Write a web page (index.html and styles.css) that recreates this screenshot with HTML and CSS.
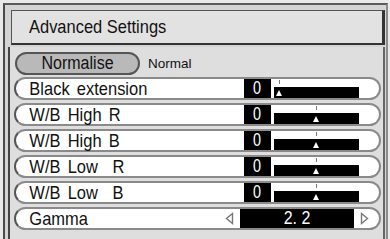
FILE: index.html
```html
<!DOCTYPE html>
<html lang="en">
<head>
    <meta charset="UTF-8">
    <meta name="viewport" content="width=device-width, initial-scale=1.0">
    <title>Advanced Settings</title>
    <link rel="stylesheet" href="styles.css">
</head>
<body>
    <div class="screen">
        <div class="title"><span class="txt">Advanced Settings</span></div>
        <div class="panel">
            <div class="mode">
                <span class="mode-btn"><span class="txt">Normalise</span></span>
                <span class="mode-val">Normal</span>
            </div>
            <ul class="rows">
                <li class="row">
                    <span class="label">Black extension</span>
                    <span class="val"><span class="txt">0</span></span>
                    <span class="slider"><span class="bar"></span><span class="marker" style="left:5px"></span></span>
                </li>
                <li class="row">
                    <span class="label">W/B High R</span>
                    <span class="val"><span class="txt">0</span></span>
                    <span class="slider"><span class="bar"></span><span class="marker" style="left:42px"></span></span>
                </li>
                <li class="row">
                    <span class="label">W/B High B</span>
                    <span class="val"><span class="txt">0</span></span>
                    <span class="slider"><span class="bar"></span><span class="marker" style="left:42px"></span></span>
                </li>
                <li class="row">
                    <span class="label">W/B Low&nbsp; R</span>
                    <span class="val"><span class="txt">0</span></span>
                    <span class="slider"><span class="bar"></span><span class="marker" style="left:42px"></span></span>
                </li>
                <li class="row">
                    <span class="label">W/B Low&nbsp; B</span>
                    <span class="val"><span class="txt">0</span></span>
                    <span class="slider"><span class="bar"></span><span class="marker" style="left:42px"></span></span>
                </li>
                <li class="row row-gamma">
                    <span class="label">Gamma</span>
                    <svg class="arrow" width="9" height="13" viewBox="0 0 9 13"><path d="M7.5 1.5 L1.5 6.5 L7.5 11.5 Z" fill="none" stroke="#777" stroke-width="1.4"/></svg>
                    <span class="gamma-val"><span class="txt">2. 2</span></span>
                    <svg class="arrow" width="9" height="13" viewBox="0 0 9 13"><path d="M1.5 1.5 L7.5 6.5 L1.5 11.5 Z" fill="none" stroke="#777" stroke-width="1.4"/></svg>
                </li>
            </ul>
        </div>
    </div>
</body>
</html>
```

FILE: styles.css
```css
body {
    margin: 0;
    background-color: #e9e9e9;
    font-family: "Liberation Sans", Arial, sans-serif;
    color: #111;
    overflow: hidden;
}
.txt {
    display: inline-block;
    transform: scaleX(0.89);
}
.screen {
    box-sizing: border-box;
    width: 385px;
    height: 236px;
    margin: 3px 0 0 3px;
    padding-top: 5px;
    border-top: 2px solid #5a5a5a;
    border-left: 2px solid #4a4a4a;
    border-right: 2px solid #8c8c8c;
    background-color: #d4d4d4;
}
.title {
    box-sizing: border-box;
    height: 35px;
    margin: 0 1px 0 6px;
    padding-left: 17px;
    display: flex;
    align-items: center;
    font-size: 18.5px;
    background-color: #e2e2e2;
    border-style: solid;
    border-color: #555 #333 #333 #555;
    border-width: 1px 3px 2px 1px;
}
.title .txt {
    transform-origin: left center;
}
.panel {
    box-sizing: border-box;
    height: 200px;
    margin: 2px 1px 0 3px;
    padding: 5px 2px 0 4px;
    border-left: 2px solid #444;
    border-right: 2px solid #666;
    background-color: #dedede;
}
.mode {
    display: flex;
    align-items: center;
    height: 23px;
}
.mode-btn {
    box-sizing: border-box;
    width: 125px;
    height: 23px;
    margin-left: 1px;
    border: 2px solid #555;
    border-radius: 12px;
    background-color: #b9b9b9;
    font-size: 18px;
    line-height: 19px;
    text-align: center;
}
.mode-val {
    margin-left: 8px;
    font-size: 13.5px;
}
.rows {
    list-style: none;
    margin: 2px 0 0;
    padding: 0;
    display: flex;
    flex-direction: column;
    gap: 3px;
}
.row {
    box-sizing: border-box;
    height: 23px;
    display: flex;
    align-items: stretch;
    border: 2px solid #8a8a8a;
    border-left-color: #555;
    border-radius: 12px;
    background-color: #fff;
}
.label {
    flex: 1;
    padding-left: 15px;
    font-size: 18.5px;
    line-height: 19px;
    word-spacing: 3px;
    white-space: nowrap;
    transform: scaleX(0.89);
    transform-origin: left center;
}
.val {
    width: 27px;
    background-color: #000;
    color: #fff;
    font-size: 18px;
    line-height: 19px;
    text-align: center;
}
.val .txt {
    transform: scaleX(0.8);
}
.slider {
    position: relative;
    width: 85px;
    margin: 0 20px 0 3px;
    display: flex;
    align-items: flex-end;
}
.bar {
    width: 100%;
    height: 11px;
    background-color: #000;
}
.marker {
    position: absolute;
    top: 0;
    bottom: 0;
    width: 7px;
    margin-left: -3px;
}
.marker::before {
    content: "";
    position: absolute;
    left: 3px;
    top: 1px;
    width: 1px;
    height: 4px;
    background-color: #777;
}
.marker::after {
    content: "";
    position: absolute;
    left: 0;
    bottom: 2px;
    border-left: 3.5px solid transparent;
    border-right: 3.5px solid transparent;
    border-bottom: 6px solid #fff;
}
.arrow {
    align-self: center;
    margin-right: 6px;
}
.gamma-val {
    width: 114px;
    background-color: #000;
    color: #fff;
    font-size: 18px;
    line-height: 19px;
    text-align: center;
}
.gamma-val + .arrow {
    margin: 0 10px 0 6px;
}
```
